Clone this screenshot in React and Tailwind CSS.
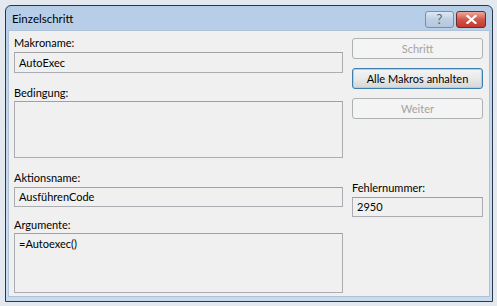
import React from 'react';

const font = { fontFamily: 'Lato, "Noto Sans", sans-serif' };

const Label = ({ children, className = '' }) => (
  <div className={`h-4 text-[11px] leading-4 text-black ${className}`}>{children}</div>
);

const Field = ({ value, className = '' }) => (
  <div className={`border border-[#abadb3] border-t-[#a0a0a0] bg-[#f0f0f0] px-[4px] text-[11px] leading-[18px] text-black ${className}`}>
    {value}
  </div>
);

const Btn = ({ children, active }) =>
  active ? (
    <div className="h-[21px] rounded-[3px] border border-[#3c7fb1] bg-gradient-to-b from-[#f4f4f4] via-[#e9e9e9] to-[#d6d6d6] p-[1px] text-center text-[11px] leading-[17px] text-black shadow-[inset_0_0_0_1px_#8fdcf4]">
      {children}
    </div>
  ) : (
    <div className="h-[21px] rounded-[3px] border border-[#adb2b5] bg-[#f4f4f4] text-center text-[11px] leading-[19px] text-[#a3a3a3]">
      {children}
    </div>
  );

export default function App() {
  return (
    <div className="h-[306px] w-[497px] bg-[#e3e9ef] pl-[5px] pt-[5px]" style={font}>
      <div className="flex h-[297px] w-[488px] flex-col rounded-t-[6px] border border-[#27384a] bg-gradient-to-b from-[#b6cde8] via-[#c8d9ec] to-[#c9dcef]">
        {/* title bar */}
        <div className="flex h-[24px] items-center pl-[6px] pr-[6px]">
          <span className="mt-[1px] text-[11.5px] text-black">Einzelschritt</span>
          <div className="ml-auto mt-[3px] flex gap-[2px]">
            <div className="flex h-[17px] w-[29px] items-center justify-center rounded-[3px] border border-[#7d8ea4] bg-gradient-to-b from-[#dde8f4] via-[#bfd0e4] to-[#b3c7de] text-[13px] leading-none text-[#56667c]">
              ?
            </div>
            <div className="flex h-[17px] w-[30px] items-center justify-center rounded-[3px] border border-[#6c2b28] bg-gradient-to-b from-[#e9a99b] via-[#d0574a] to-[#c2382c]">
              <svg width="11" height="9" viewBox="0 0 11 9">
                <path d="M1.5 1 L9.5 8 M9.5 1 L1.5 8" stroke="#ffffff" strokeWidth="2.2" strokeLinecap="square" />
              </svg>
            </div>
          </div>
        </div>

        {/* client area */}
        <div className="mx-[2px] flex h-[267px] border border-[#b0c2d6] bg-[#f0f0f0] pl-[5px] pr-[6px]">
          <div className="flex w-[329px] flex-col">
            <Label className="mt-[4px]">Makroname:</Label>
            <Field value="AutoExec" className="mt-[1px] h-[21px] pt-[1px]" />
            <Label className="mt-[12px]">Bedingung:</Label>
            <Field value="" className="h-[57px]" />
            <Label className="mt-[12px]">Aktionsname:</Label>
            <Field value="AusführenCode" className="mt-[1px] h-[20px]" />
            <Label className="mt-[10px]">Argumente:</Label>
            <Field value="=Autoexec()" className="h-[60px] pt-[1px]" />
          </div>

          <div className="ml-[9px] flex w-[131px] flex-col">
            <div className="mt-[7px]">
              <Btn>Schritt</Btn>
            </div>
            <div className="mt-[9px]">
              <Btn active>Alle Makros anhalten</Btn>
            </div>
            <div className="mt-[9px]">
              <Btn>Weiter</Btn>
            </div>
            <Label className="mt-[61px]">Fehlernummer:</Label>
            <Field value="2950" className="mt-[1px] h-[20px]" />
          </div>
        </div>
      </div>
    </div>
  );
}
